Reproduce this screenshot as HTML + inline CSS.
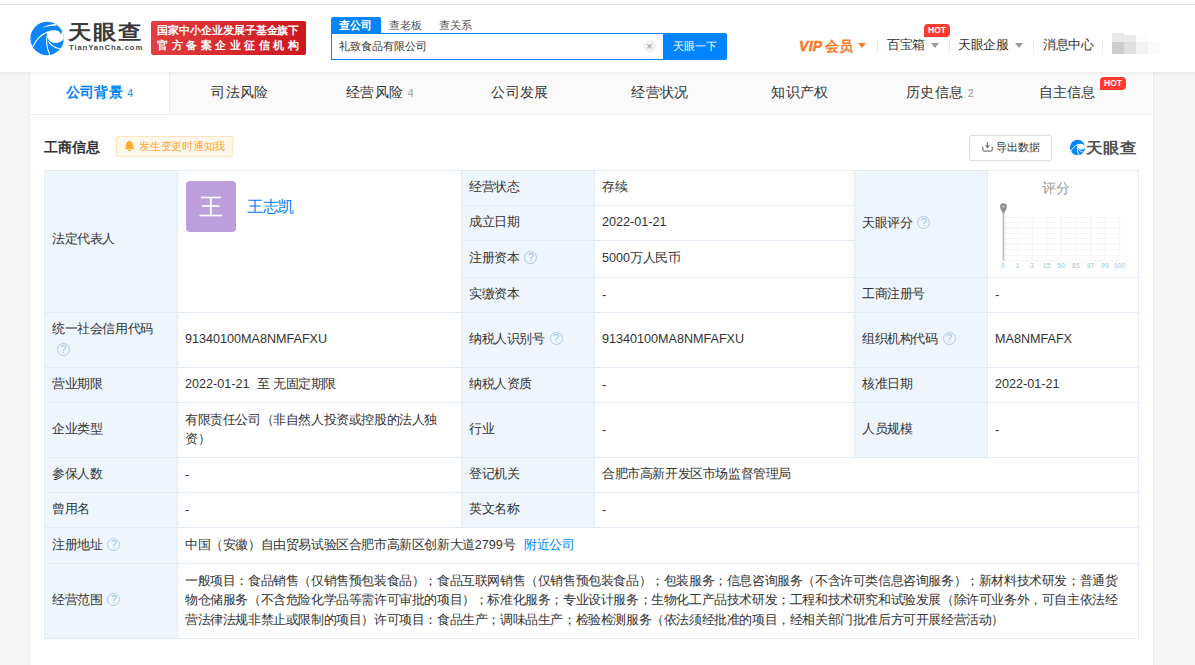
<!DOCTYPE html>
<html><head><meta charset="utf-8">
<style>
*{box-sizing:border-box;margin:0;padding:0}
html,body{width:1195px;height:665px;overflow:hidden;background:#f5f5f5;font-family:"Liberation Sans",sans-serif;color:#333}
.a{position:absolute;white-space:nowrap}
#hdr{position:absolute;left:0;top:0;width:1195px;height:72px;background:#fff}
#topline{position:absolute;left:0;top:4px;width:1195px;height:1px;background:#dedede}
#card{position:absolute;left:30px;top:72px;width:1123px;height:600px;background:#fff;box-shadow:-1px 0 0 #ececec,1px 0 0 #ececec}
#shadow{position:absolute;left:0;top:72px;width:1195px;height:5px;background:linear-gradient(rgba(0,0,0,0.045),rgba(0,0,0,0))}
.tabs{position:absolute;left:30px;top:72px;width:1122px;height:43px;background:#fafafa;border-bottom:1px solid #eeeeee}
.tab{position:absolute;top:0;height:42px;text-align:center;font-size:14px;line-height:41px;color:#333;letter-spacing:0.4px}
.tab .c{font-size:10.5px;color:#999;margin-left:4px}
#grid{position:absolute;left:44px;top:170px;width:1095px;height:469px;background:#e3ecf5}
.cell{position:absolute;background:#fff;font-size:13px;letter-spacing:-0.4px;color:#333;display:flex;align-items:center;padding-left:7px;padding-bottom:2px;white-space:nowrap}
.lb{background:#eef5fd}
.n{font-size:12.6px;letter-spacing:0}
.q{display:inline-block;width:13px;height:13px;border:1.2px solid #b1cbe6;border-radius:50%;color:#9fc0e2;font-size:10.5px;line-height:11px;text-align:center;letter-spacing:0;margin-left:5px;vertical-align:middle;position:relative;top:-0.5px}
.av{position:absolute;left:8px;top:10px;width:50px;height:51px;border-radius:4px;background:#bb9edb;color:#fff;font-size:24px;line-height:51px;text-align:center}
.avn{position:absolute;left:69px;top:26px;font-size:16px;line-height:20px;color:#0084ff}
</style></head><body>
<div id="hdr"></div>
<div id="topline"></div>
<!-- logo -->
<svg class="a" style="left:29px;top:20px" width="36" height="37" viewBox="0 0 36 37">
  <defs><clipPath id="cc"><circle cx="18.1" cy="18.5" r="16.7"/></clipPath></defs>
  <circle cx="18.1" cy="18.5" r="16.7" fill="#0a84ff"/>
  <g clip-path="url(#cc)" fill="#fff">
    <path d="M12.8 7.6 Q19 4.6 27.2 3.8 L27.8 5.6 Q19.5 6.3 12.8 7.6 Z"/>
    <path d="M18.4 12 C21 10.3 25 9.8 28.3 10.7 C30.6 11.4 31.8 12.8 31.7 14.8 C32.6 13.6 33 12.2 32.9 10.6 L36 9.5 L36 16.9 C34.6 20.6 31.6 22.6 27.5 22.9 C23.5 23.1 20.2 21.4 18.9 18.4 C18.2 16.3 18.1 14 18.4 12 Z"/>
    <path d="M3.4 27.2 C6.4 21 12 14.3 19.3 11.8" stroke="#fff" stroke-width="1.15" fill="none"/>
    <path d="M19 12.2 C17 18 16.8 25.5 20.8 35" stroke="#fff" stroke-width="1.1" fill="none"/>
    <path d="M19.3 21 C21 24.5 25 27.6 31.2 28.8" stroke="#fff" stroke-width="1.1" fill="none"/>
  </g>
</svg>
<div class="a" style="left:68px;top:18px;font-size:20px;line-height:28px;color:#3a3a3a;font-weight:bold;letter-spacing:1.3px;transform:scaleX(1.17);transform-origin:0 0">天眼查</div>
<div class="a" style="left:69px;top:42px;font-size:7.8px;line-height:12px;color:#4a4a4a;font-weight:bold;letter-spacing:0.82px">TianYanCha.com</div>
<!-- red badge -->
<div class="a" style="left:151px;top:21px;width:155px;height:34px;border-radius:2px;background:linear-gradient(90deg,#e23d40,#cc181e)"></div>
<div class="a" style="left:157px;top:22px;font-size:11px;line-height:17px;color:#fff;letter-spacing:-0.05px;font-weight:bold">国家中小企业发展子基金旗下</div>
<div class="a" style="left:157px;top:37px;font-size:11px;line-height:17px;color:#fff;letter-spacing:3.55px;font-weight:bold">官方备案企业征信机构</div>
<!-- search -->
<div class="a" style="left:331px;top:17px;width:50px;height:17px;background:#0084ff;border-radius:2px 2px 0 0"></div>
<div class="a" style="left:339px;top:16px;font-size:11px;line-height:18px;color:#fff;font-weight:bold">查公司</div>
<div class="a" style="left:389px;top:16px;font-size:11px;line-height:18px;color:#555">查老板</div>
<div class="a" style="left:439px;top:16px;font-size:11px;line-height:18px;color:#555">查关系</div>
<div class="a" style="left:331px;top:33px;width:334px;height:27px;border:1px solid #0084ff;background:#fff"></div>
<div class="a" style="left:339px;top:37px;font-size:11px;line-height:18px;color:#333">礼致食品有限公司</div>
<div class="a" style="left:643px;top:40px;width:13px;height:13px;border-radius:50%;background:#f2f2f2;color:#999;font-size:11px;line-height:13px;text-align:center">×</div>
<div class="a" style="left:663px;top:33px;width:64px;height:27px;background:#0084ff;border-radius:0 2px 2px 0"></div>
<div class="a" style="left:673px;top:37px;font-size:11px;line-height:18px;color:#fff">天眼一下</div>
<!-- right nav -->
<div class="a" style="left:799px;top:36px;font-size:14px;line-height:20px;color:#fc7a1f;font-weight:bold"><i style="font-style:italic;-webkit-text-stroke:0.5px #fc7a1f;letter-spacing:0.3px">VIP</i><span style="margin-left:3px">会员</span></div>
<div class="a" style="left:858px;top:43px;width:0;height:0;border-left:4px solid transparent;border-right:4px solid transparent;border-top:5px solid #fc7a1f"></div>
<div class="a" style="left:877px;top:40px;width:1px;height:13px;background:#e6e6e6"></div>
<div class="a" style="left:887px;top:35px;font-size:13px;letter-spacing:-0.4px;line-height:20px;color:#333">百宝箱</div>
<div class="a" style="left:931px;top:43px;width:0;height:0;border-left:4px solid transparent;border-right:4px solid transparent;border-top:5px solid #999"></div>
<div class="a" style="left:924px;top:24px;width:26px;height:13px;background:#ff3b30;border-radius:4px 4px 4px 0;color:#fff;font-size:8.5px;font-weight:bold;line-height:13px;text-align:center">HOT</div>
<div class="a" style="left:949px;top:40px;width:1px;height:13px;background:#e6e6e6"></div>
<div class="a" style="left:958px;top:35px;font-size:13px;letter-spacing:-0.4px;line-height:20px;color:#333">天眼企服</div>
<div class="a" style="left:1015px;top:43px;width:0;height:0;border-left:4px solid transparent;border-right:4px solid transparent;border-top:5px solid #999"></div>
<div class="a" style="left:1033px;top:40px;width:1px;height:13px;background:#e6e6e6"></div>
<div class="a" style="left:1043px;top:35px;font-size:13px;letter-spacing:-0.4px;line-height:20px;color:#333">消息中心</div>
<div class="a" style="left:1102px;top:40px;width:1px;height:13px;background:#e6e6e6"></div>
<div class="a" style="left:1112px;top:33px;width:12px;height:9px;background:#e9e9e9"></div>
<div class="a" style="left:1124px;top:35px;width:12px;height:7px;background:#eaeaea"></div>
<div class="a" style="left:1136px;top:36px;width:12px;height:6px;background:#fcfcfc"></div>
<div class="a" style="left:1112px;top:42px;width:12px;height:12px;background:#cccccc"></div>
<div class="a" style="left:1124px;top:42px;width:12px;height:12px;background:#dfdfdf"></div>
<div class="a" style="left:1136px;top:42px;width:12px;height:12px;background:#f2f2f2"></div>
<div class="a" style="left:1148px;top:42px;width:12px;height:12px;background:#fafafa"></div>
<div id="card"></div>

<!-- tabs -->
<div class="tabs">
  <div class="tab" style="left:0;width:140px;background:#fff;border-right:1px solid #ededed;color:#0084ff;font-weight:bold">公司背景<span class="c" style="color:#0084ff;font-weight:normal">4</span></div>
  <div class="tab" style="left:140px;width:140px">司法风险</div>
  <div class="tab" style="left:280px;width:140px">经营风险<span class="c">4</span></div>
  <div class="tab" style="left:420px;width:140px">公司发展</div>
  <div class="tab" style="left:560px;width:140px">经营状况</div>
  <div class="tab" style="left:700px;width:140px">知识产权</div>
  <div class="tab" style="left:840px;width:140px">历史信息<span class="c">2</span></div>
  <div class="tab" style="left:980px;width:142px"></div>
  <div class="a" style="left:1009px;top:0;font-size:14px;line-height:41px;color:#333">自主信息</div>
  <div class="a" style="left:1070px;top:5px;width:26px;height:13px;background:#ff3b30;border-radius:4px 4px 4px 0;color:#fff;font-size:8.5px;font-weight:bold;line-height:13px;text-align:center">HOT</div>
</div>
<div id="shadow"></div>

<!-- section title -->
<div class="a" style="left:44px;top:136px;font-size:14.4px;font-weight:bold;line-height:22px;color:#333">工商信息</div>
<div class="a" style="left:116px;top:136px;width:117px;height:21px;background:#fff8ec;border:1px solid #fde3c0;border-radius:2px"></div>
<div class="a" style="left:139px;top:137px;font-size:11px;line-height:19px;color:#ffa630;letter-spacing:-0.25px">发生变更时通知我</div>

<div class="a" style="left:969px;top:135px;width:83px;height:26px;border:1px solid #dddddd;border-radius:2px;background:#fff"></div>
<div class="a" style="left:996px;top:137px;font-size:11px;line-height:20px;color:#333">导出数据</div>

<!-- bell -->
<svg class="a" style="left:124px;top:140px" width="11" height="12" viewBox="0 0 11 12"><ellipse cx="5.5" cy="1.3" rx="0.8" ry="0.8" fill="#ffab2e"/><path d="M5.5 1.2 C3 1.2 2 3.2 2 5.2 L2 7.6 L0.6 9.2 L10.4 9.2 L9 7.6 L9 5.2 C9 3.2 8 1.2 5.5 1.2 Z" fill="#ffab2e"/><ellipse cx="5.5" cy="10.4" rx="1.4" ry="0.8" fill="#ffab2e"/></svg>
<!-- download icon -->
<svg class="a" style="left:982px;top:141px" width="11" height="11" viewBox="0 0 11 11"><path d="M5.5 1.2 L5.5 6" stroke="#777" stroke-width="1.3"/><path d="M2.9 4.6 L8.1 4.6 L5.5 7.5 Z" fill="#777"/><path d="M0.75 5.8 L0.75 8.4 Q0.75 10.2 2.5 10.2 L8.5 10.2 Q10.25 10.2 10.25 8.4 L10.25 5.8" stroke="#808080" stroke-width="1.3" fill="none"/></svg>
<!-- small logo -->
<svg class="a" style="left:1069px;top:139px" width="17" height="17" viewBox="0 0 36 37">
  <defs><clipPath id="cc2"><circle cx="18.1" cy="18.5" r="16.7"/></clipPath></defs>
  <circle cx="18.1" cy="18.5" r="16.7" fill="#0a84ff"/>
  <g clip-path="url(#cc2)" fill="#fff">
    <path d="M18.4 12 C21 10.3 25 9.8 28.3 10.7 C30.6 11.4 31.8 12.8 31.7 14.8 C32.6 13.6 33 12.2 32.9 10.6 L36 9.5 L36 16.9 C34.6 20.6 31.6 22.6 27.5 22.9 C23.5 23.1 20.2 21.4 18.9 18.4 C18.2 16.3 18.1 14 18.4 12 Z"/>
    <path d="M3.4 27.2 C6.4 21 12 14.3 19.3 11.8" stroke="#fff" stroke-width="2" fill="none"/>
    <path d="M19 12.2 C17 18 16.8 25.5 20.8 35" stroke="#fff" stroke-width="2" fill="none"/>
    <path d="M19.3 21 C21 24.5 25 27.6 31.2 28.8" stroke="#fff" stroke-width="2" fill="none"/>
  </g>
</svg>
<div class="a" style="left:1086px;top:137px;font-size:15px;line-height:22px;color:#505050;font-weight:bold;letter-spacing:0.6px;transform:scaleX(1.1);transform-origin:0 0">天眼查</div>
<!-- table grid -->
<div id="grid">
<div class="cell lb" style="left:1px;top:1px;width:132px;height:141px;padding-bottom:6px">法定代表人</div>
<div class="cell" style="left:134px;top:1px;width:283px;height:141px;align-items:flex-start"><div class="av">王</div><div class="avn">王志凯</div></div>
<div class="cell lb" style="left:418px;top:1px;width:132px;height:34px;">经营状态</div>
<div class="cell" style="left:551px;top:1px;width:259px;height:34px;">存续</div>
<div class="cell lb" style="left:418px;top:36px;width:132px;height:34px;">成立日期</div>
<div class="cell" style="left:551px;top:36px;width:259px;height:34px;"><span class="n">2022-01-21</span></div>
<div class="cell lb" style="left:418px;top:71px;width:132px;height:36px;">注册资本<span class="q">?</span></div>
<div class="cell" style="left:551px;top:71px;width:259px;height:36px;"><span class="n">5000</span>万人民币</div>
<div class="cell lb" style="left:418px;top:108px;width:132px;height:34px;">实缴资本</div>
<div class="cell" style="left:551px;top:108px;width:259px;height:34px;">-</div>
<div class="cell lb" style="left:811px;top:1px;width:132px;height:106px;">天眼评分<span class="q">?</span></div>
<div class="cell" style="left:944px;top:1px;width:150px;height:106px;padding:0"><svg class="a" style="left:0;top:0" width="150" height="106" viewBox="0 0 150 106"><line x1="15.0" y1="46.10" x2="131.79999999999995" y2="46.10" stroke="#f4f4f4" stroke-width="1"/><line x1="15.0" y1="51.53" x2="131.79999999999995" y2="51.53" stroke="#f4f4f4" stroke-width="1"/><line x1="15.0" y1="56.96" x2="131.79999999999995" y2="56.96" stroke="#f4f4f4" stroke-width="1"/><line x1="15.0" y1="62.39" x2="131.79999999999995" y2="62.39" stroke="#f4f4f4" stroke-width="1"/><line x1="15.0" y1="67.82" x2="131.79999999999995" y2="67.82" stroke="#f4f4f4" stroke-width="1"/><line x1="15.0" y1="73.25" x2="131.79999999999995" y2="73.25" stroke="#f4f4f4" stroke-width="1"/><line x1="15.0" y1="78.68" x2="131.79999999999995" y2="78.68" stroke="#f4f4f4" stroke-width="1"/><line x1="15.0" y1="84.11" x2="131.79999999999995" y2="84.11" stroke="#f4f4f4" stroke-width="1"/><line x1="15.0" y1="89.54" x2="131.79999999999995" y2="89.54" stroke="#f4f4f4" stroke-width="1"/><line x1="15.00" y1="45.599999999999994" x2="15.00" y2="89.54" stroke="#f4f4f4" stroke-width="1"/><line x1="29.60" y1="45.599999999999994" x2="29.60" y2="89.54" stroke="#f4f4f4" stroke-width="1"/><line x1="44.20" y1="45.599999999999994" x2="44.20" y2="89.54" stroke="#f4f4f4" stroke-width="1"/><line x1="58.80" y1="45.599999999999994" x2="58.80" y2="89.54" stroke="#f4f4f4" stroke-width="1"/><line x1="73.40" y1="45.599999999999994" x2="73.40" y2="89.54" stroke="#f4f4f4" stroke-width="1"/><line x1="88.00" y1="45.599999999999994" x2="88.00" y2="89.54" stroke="#f4f4f4" stroke-width="1"/><line x1="102.60" y1="45.599999999999994" x2="102.60" y2="89.54" stroke="#f4f4f4" stroke-width="1"/><line x1="117.20" y1="45.599999999999994" x2="117.20" y2="89.54" stroke="#f4f4f4" stroke-width="1"/><line x1="131.80" y1="45.599999999999994" x2="131.80" y2="89.54" stroke="#f4f4f4" stroke-width="1"/><text x="15.00" y="97.30" font-size="6.5" fill="#93c6d0" text-anchor="middle" font-family="Liberation Sans, sans-serif" letter-spacing="0.3">0</text><text x="29.60" y="97.30" font-size="6.5" fill="#93c6d0" text-anchor="middle" font-family="Liberation Sans, sans-serif" letter-spacing="0.3">1</text><text x="44.20" y="97.30" font-size="6.5" fill="#93c6d0" text-anchor="middle" font-family="Liberation Sans, sans-serif" letter-spacing="0.3">3</text><text x="58.80" y="97.30" font-size="6.5" fill="#93c6d0" text-anchor="middle" font-family="Liberation Sans, sans-serif" letter-spacing="0.3">15</text><text x="73.40" y="97.30" font-size="6.5" fill="#93c6d0" text-anchor="middle" font-family="Liberation Sans, sans-serif" letter-spacing="0.3">50</text><text x="88.00" y="97.30" font-size="6.5" fill="#93c6d0" text-anchor="middle" font-family="Liberation Sans, sans-serif" letter-spacing="0.3">85</text><text x="102.60" y="97.30" font-size="6.5" fill="#93c6d0" text-anchor="middle" font-family="Liberation Sans, sans-serif" letter-spacing="0.3">97</text><text x="117.20" y="97.30" font-size="6.5" fill="#93c6d0" text-anchor="middle" font-family="Liberation Sans, sans-serif" letter-spacing="0.3">99</text><text x="131.80" y="97.30" font-size="6.5" fill="#93c6d0" text-anchor="middle" font-family="Liberation Sans, sans-serif" letter-spacing="0.3">100</text><line x1="15.5" y1="41" x2="15.5" y2="89.5" stroke="#bcbcbc" stroke-width="1.6"/><path d="M15.5 43 C14.0 40 12.1 38.5 12.1 35.599999999999994 A3.4 3.4 0 1 1 18.9 35.599999999999994 C18.9 38.5 17.0 40 15.5 43 Z" fill="#8c8c8c"/><circle cx="15.5" cy="35.599999999999994" r="1.2" fill="#c8c8c8"/></svg><div class="a" style="left:54px;top:7px;font-size:14px;line-height:20px;color:#999">评分</div></div>
<div class="cell lb" style="left:811px;top:108px;width:132px;height:34px;">工商注册号</div>
<div class="cell" style="left:944px;top:108px;width:150px;height:34px;">-</div>
<div class="cell lb" style="left:1px;top:143px;width:132px;height:54px;"><div style="line-height:20px;white-space:normal;width:110px">统一社会信用代码<br><span class="q" style="margin-left:5px">?</span></div></div>
<div class="cell" style="left:134px;top:143px;width:283px;height:54px;"><span class="n">91340100MA8NMFAFXU</span></div>
<div class="cell lb" style="left:418px;top:143px;width:132px;height:54px;">纳税人识别号<span class="q">?</span></div>
<div class="cell" style="left:551px;top:143px;width:259px;height:54px;"><span class="n">91340100MA8NMFAFXU</span></div>
<div class="cell lb" style="left:811px;top:143px;width:132px;height:54px;">组织机构代码<span class="q">?</span></div>
<div class="cell" style="left:944px;top:143px;width:150px;height:54px;"><span class="n">MA8NMFAFX</span></div>
<div class="cell lb" style="left:1px;top:198px;width:132px;height:34px;">营业期限</div>
<div class="cell" style="left:134px;top:198px;width:283px;height:34px;"><span class="n">2022-01-21</span><span style="margin-left:8px">至</span><span style="margin-left:3px">无固定期限</span></div>
<div class="cell lb" style="left:418px;top:198px;width:132px;height:34px;">纳税人资质</div>
<div class="cell" style="left:551px;top:198px;width:259px;height:34px;">-</div>
<div class="cell lb" style="left:811px;top:198px;width:132px;height:34px;">核准日期</div>
<div class="cell" style="left:944px;top:198px;width:150px;height:34px;"><span class="n">2022-01-21</span></div>
<div class="cell lb" style="left:1px;top:233px;width:132px;height:54px;">企业类型</div>
<div class="cell" style="left:134px;top:233px;width:283px;height:54px;"><div style="line-height:19.5px">有限责任公司（非自然人投资或控股的法人独<br>资）</div></div>
<div class="cell lb" style="left:418px;top:233px;width:132px;height:54px;">行业</div>
<div class="cell" style="left:551px;top:233px;width:259px;height:54px;">-</div>
<div class="cell lb" style="left:811px;top:233px;width:132px;height:54px;">人员规模</div>
<div class="cell" style="left:944px;top:233px;width:150px;height:54px;">-</div>
<div class="cell lb" style="left:1px;top:288px;width:132px;height:34px;">参保人数</div>
<div class="cell" style="left:134px;top:288px;width:283px;height:34px;">-</div>
<div class="cell lb" style="left:418px;top:288px;width:132px;height:34px;">登记机关</div>
<div class="cell" style="left:551px;top:288px;width:543px;height:34px;">合肥市高新开发区市场监督管理局</div>
<div class="cell lb" style="left:1px;top:323px;width:132px;height:34px;">曾用名</div>
<div class="cell" style="left:134px;top:323px;width:283px;height:34px;">-</div>
<div class="cell lb" style="left:418px;top:323px;width:132px;height:34px;">英文名称</div>
<div class="cell" style="left:551px;top:323px;width:543px;height:34px;">-</div>
<div class="cell lb" style="left:1px;top:358px;width:132px;height:35px;">注册地址<span class="q">?</span></div>
<div class="cell" style="left:134px;top:358px;width:960px;height:35px;">中国（安徽）自由贸易试验区合肥市高新区创新大道<span class="n">2799</span>号 <span style="color:#0084ff;margin-left:8.5px">附近公司</span></div>
<div class="cell lb" style="left:1px;top:394px;width:132px;height:74px;">经营范围<span class="q">?</span></div>
<div class="cell" style="left:134px;top:394px;width:960px;height:74px;"><div style="line-height:19.5px">一般项目：食品销售（仅销售预包装食品）；食品互联网销售（仅销售预包装食品）；包装服务；信息咨询服务（不含许可类信息咨询服务）；新材料技术研发；普通货<br>物仓储服务（不含危险化学品等需许可审批的项目）；标准化服务；专业设计服务；生物化工产品技术研发；工程和技术研究和试验发展（除许可业务外，可自主依法经<br>营法律法规非禁止或限制的项目）许可项目：食品生产；调味品生产；检验检测服务（依法须经批准的项目，经相关部门批准后方可开展经营活动）</div></div>

</div>
</body></html>
